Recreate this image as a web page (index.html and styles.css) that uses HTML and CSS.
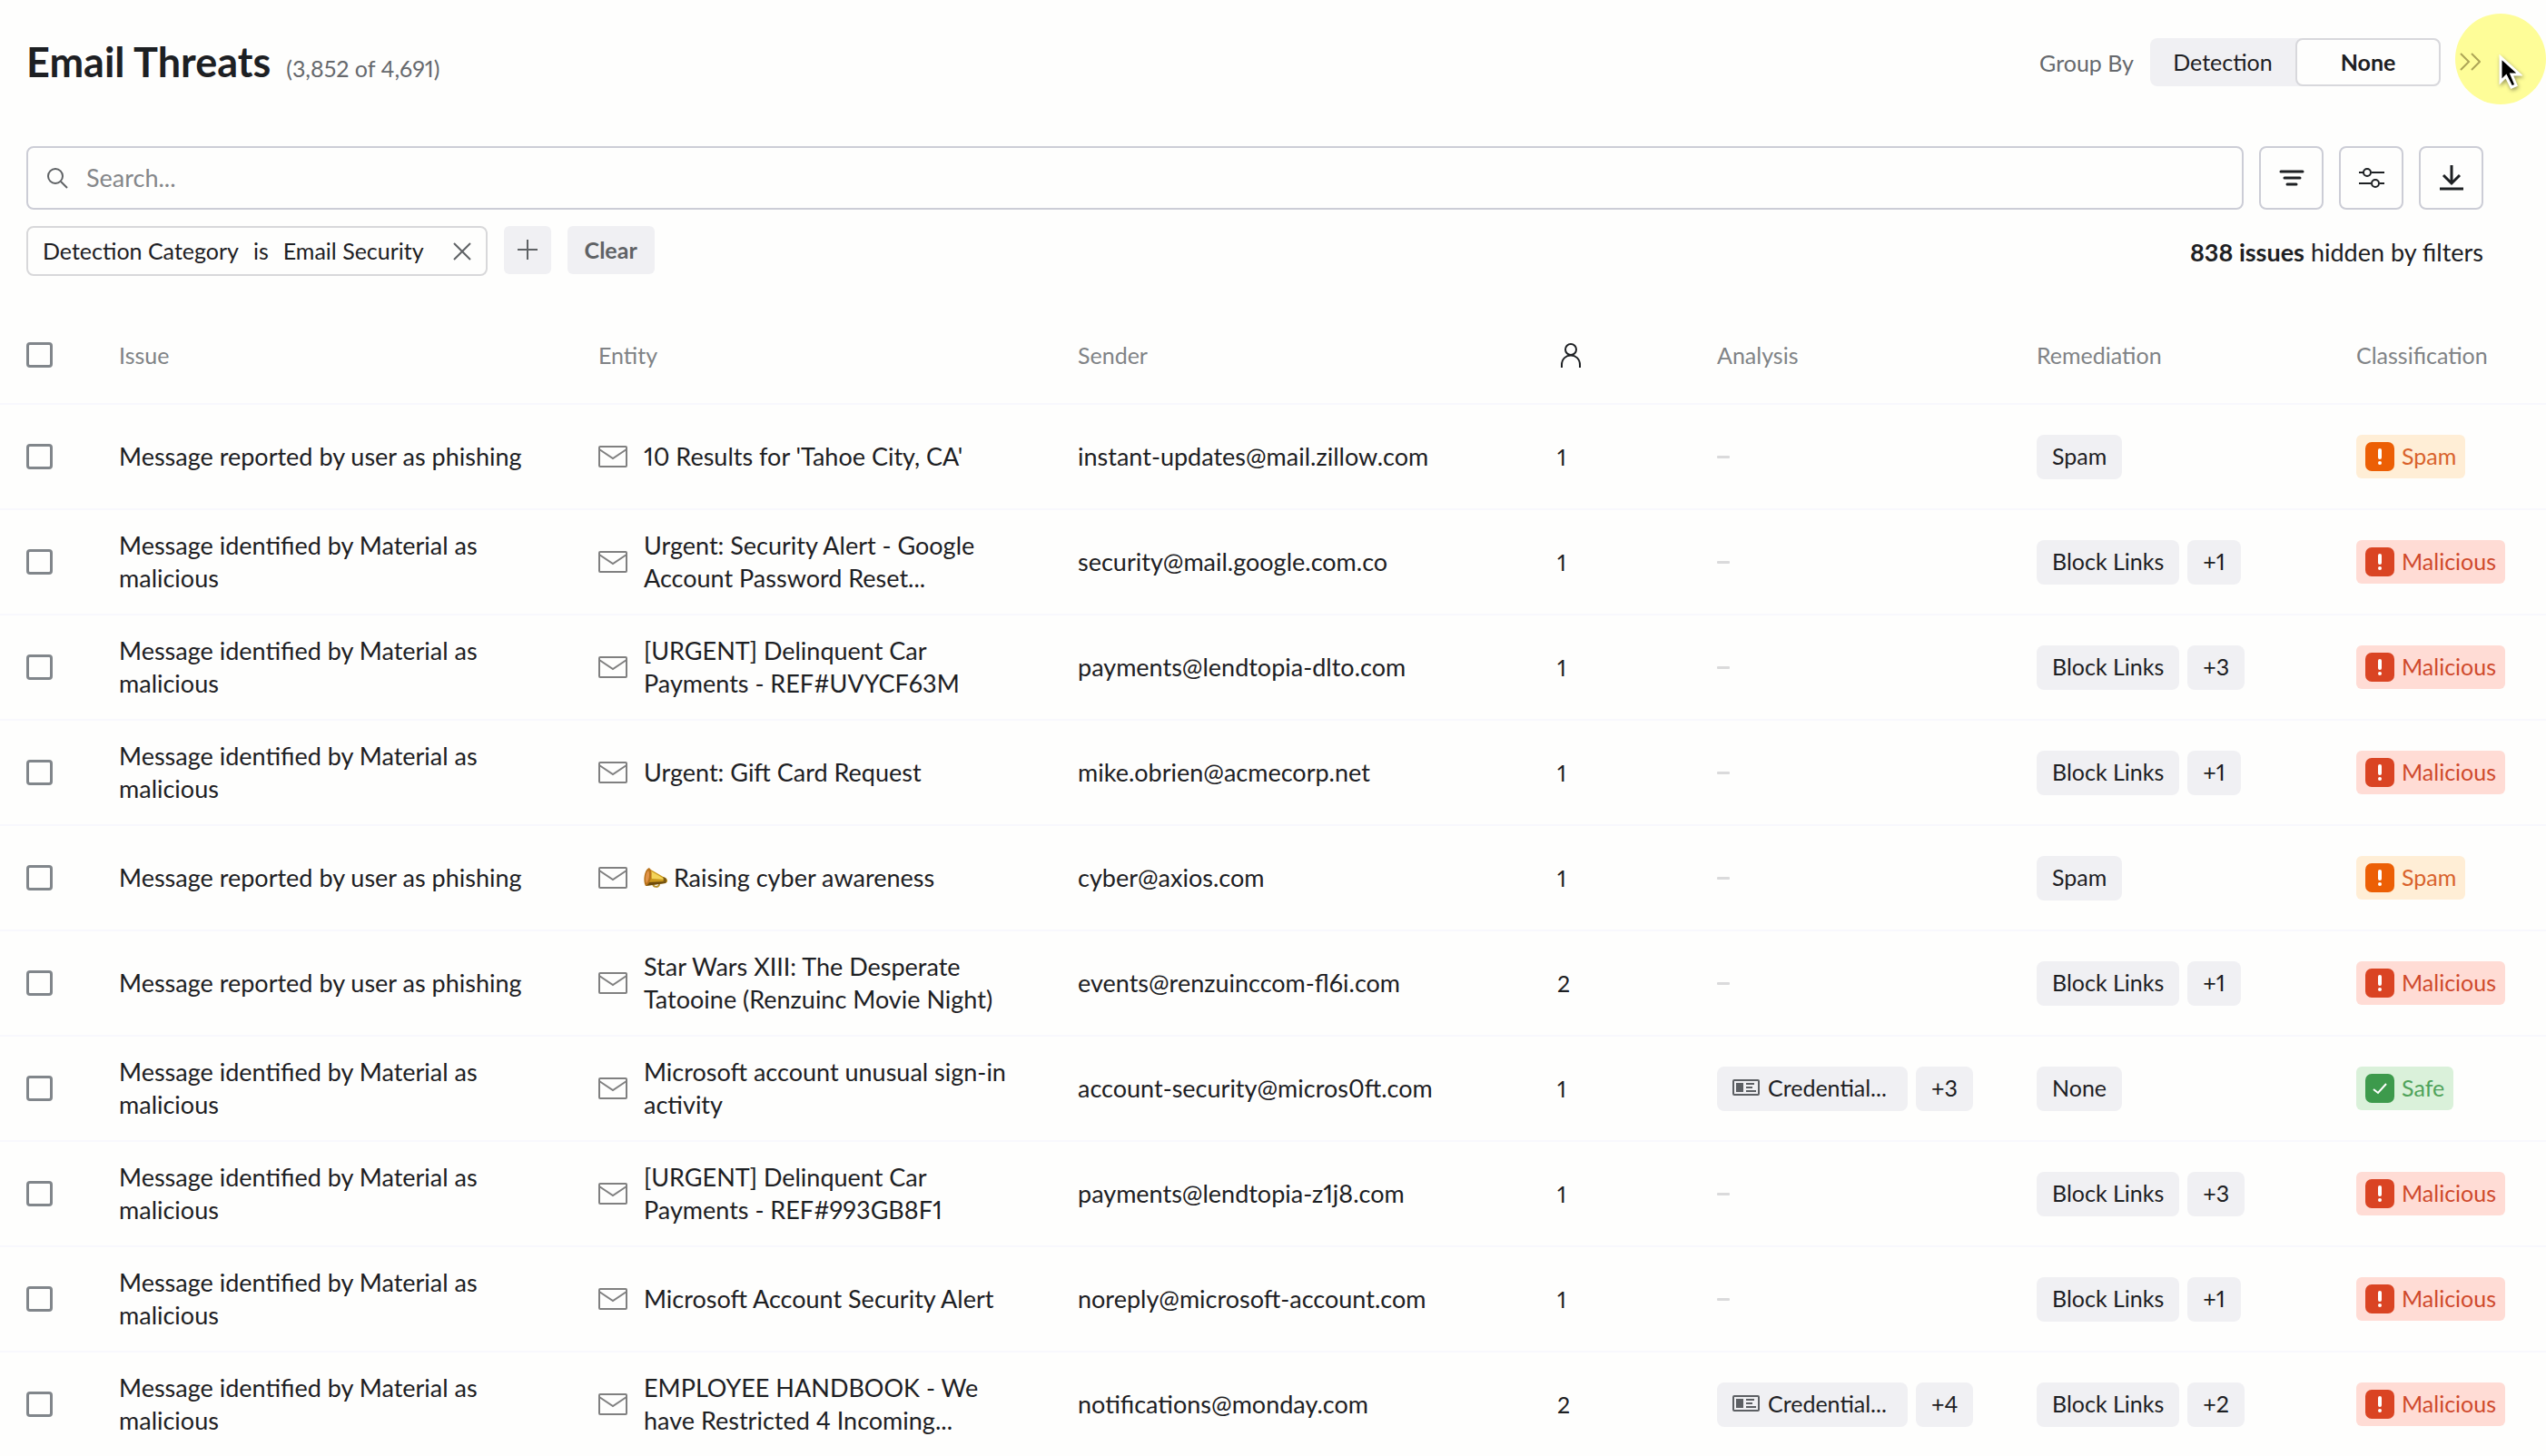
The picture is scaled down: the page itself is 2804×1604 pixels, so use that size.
FILE: index.html
```html
<!DOCTYPE html>
<html lang="en">
<head>
    <meta charset="UTF-8">
    <meta name="viewport" content="width=device-width, initial-scale=1.0">
    <title>Email Threats</title>
    <link rel="stylesheet" href="styles.css">
</head>
<body>
    <!-- Shared icons -->
    <svg class="sprite" aria-hidden="true">
        <symbol id="icon-mail" viewBox="0 0 32 24">
            <rect x="1" y="1" width="30" height="22" rx="1" fill="none" stroke="currentColor" stroke-width="2"/>
            <path d="M1 4l15 10L31 4" fill="none" stroke="currentColor" stroke-width="2"/>
        </symbol>
        <symbol id="icon-alert" viewBox="0 0 32 32">
            <rect width="32" height="32" rx="7" fill="currentColor"/>
            <path d="M16 9v8" stroke="#fff" stroke-width="4" stroke-linecap="round"/>
            <circle cx="16" cy="23" r="2" fill="#fff"/>
        </symbol>
        <symbol id="icon-check" viewBox="0 0 32 32">
            <rect width="32" height="32" rx="7" fill="currentColor"/>
            <path d="M9 17l5 4 9-10" fill="none" stroke="#fff" stroke-width="2"/>
        </symbol>
        <symbol id="icon-card" viewBox="0 0 30 18">
            <rect x="1" y="1" width="28" height="16" rx="1" fill="none" stroke="currentColor" stroke-width="2"/>
            <path d="M4 4h8v10H4z" fill="currentColor"/>
            <path d="M15 5h9M15 9h7M15 13h11" stroke="currentColor" stroke-width="2"/>
        </symbol>
        <symbol id="icon-megaphone" viewBox="0 0 26 22">
            <path d="M10 17c0 5 7 5 7 1" fill="none" stroke="#b8922c" stroke-width="2"/>
            <path d="M6 1l19 11c2 2 1 5-2 5L2 20z" fill="#c9971c"/>
            <path d="M7 3l17 10-15-1z" fill="#f3d45a"/>
            <path d="M4 16l21-1-1 2-22 3z" fill="#6d4b0d"/>
            <path d="M6 0c3 3 3 7 2 11s-3 8-6 9c-3-4-2-18 4-20z" fill="#b9731b"/>
            <path d="M5 3c2 3 1 11-2 14-2-3-1-12 2-14z" fill="#e0934a"/>
            <path d="M21 10c1 2 1 4 0 7l3-1c2-2 1-4 0-5z" fill="#7d5a12"/>
        </symbol>
    </svg>

    <header class="page-header">
        <h1>Email Threats</h1>
        <span class="count">(3,852 of 4,691)</span>
        <div class="group-by">
            <span id="group-label">Group By</span>
            <div class="segmented" role="group" aria-labelledby="group-label">
                <button type="button">Detection</button>
                <button type="button" class="active" aria-pressed="true">None</button>
            </div>
            <button type="button" class="expand" aria-label="Expand panel">
                <svg width="24" height="20" viewBox="0 0 24 20" fill="none" stroke="currentColor" stroke-width="2"><path d="M2 1l9 9-9 9M14 1l9 9-9 9"/></svg>
            </button>
        </div>
        <div class="pointer" aria-hidden="true">
            <svg width="26" height="38" viewBox="0 0 26 38"><path d="M2 3v27l6-6 6 12 5-2-5-12h9z" fill="#000" stroke="#fff" stroke-width="3"/></svg>
        </div>
    </header>

    <div class="toolbar">
        <label class="search">
            <svg width="24" height="24" viewBox="0 0 24 24" fill="none" stroke="currentColor" stroke-width="2"><circle cx="10" cy="10" r="8"/><path d="M16 16l7 7"/></svg>
            <input type="text" placeholder="Search..." aria-label="Search">
        </label>
        <button type="button" class="icon-button" aria-label="Sort">
            <svg width="28" height="28" viewBox="0 0 28 28" fill="none" stroke="currentColor" stroke-width="3" stroke-linecap="round"><path d="M2 7h24M6 14h17M9 21h10"/></svg>
        </button>
        <button type="button" class="icon-button" aria-label="Columns">
            <svg width="28" height="28" viewBox="0 0 28 28" fill="none" stroke="currentColor" stroke-width="2"><path d="M0 8h5M14 8h14M0 20h13M23 20h5"/><circle cx="9" cy="8" r="4"/><circle cx="18" cy="20" r="4"/></svg>
        </button>
        <button type="button" class="icon-button" aria-label="Download">
            <svg width="28" height="28" viewBox="0 0 28 28" fill="none" stroke="currentColor" stroke-width="3"><path d="M14 0v20M5 11l9 9 9-9M1 26h26"/></svg>
        </button>
    </div>

    <div class="filters">
        <div class="filter-chip">
            <span>Detection Category</span>
            <span>is</span>
            <span>Email Security</span>
            <button type="button" aria-label="Remove filter">
                <svg width="20" height="20" viewBox="0 0 20 20" stroke="currentColor" stroke-width="2"><path d="M1 1l18 18M19 1L1 19"/></svg>
            </button>
        </div>
        <button type="button" class="add" aria-label="Add filter">
            <svg width="22" height="22" viewBox="0 0 22 22" stroke="currentColor" stroke-width="2"><path d="M11 0v22M0 11h22"/></svg>
        </button>
        <button type="button" class="clear">Clear</button>
        <p><strong>838 issues</strong> hidden by filters</p>
    </div>

    <table class="issues">
        <thead>
            <tr>
                <th><input type="checkbox" aria-label="Select all issues"></th>
                <th>Issue</th>
                <th>Entity</th>
                <th>Sender</th>
                <th class="people" aria-label="People">
                    <svg width="24" height="28" viewBox="0 0 24 28" fill="none" stroke="currentColor" stroke-width="2"><circle cx="12" cy="8" r="6"/><path d="M2 28v-3c0-14 20-14 20 0v3"/></svg>
                </th>
                <th>Analysis</th>
                <th>Remediation</th>
                <th>Classification</th>
            </tr>
        </thead>
        <tbody id="issues">
            <!-- Rows are inserted here -->
        </tbody>
    </table>

    <script>
        const REPORTED = 'Message reported by user as phishing';
        const IDENTIFIED = 'Message identified by Material as malicious';

        const issues = [
            { issue: REPORTED, entity: "10 Results for 'Tahoe City, CA'", sender: 'instant-updates@mail.zillow.com', people: 1, analysis: [], remediation: ['Spam'], status: 'Spam' },
            { issue: IDENTIFIED, entity: 'Urgent: Security Alert - Google Account Password Reset...', sender: 'security@mail.google.com.co', people: 1, analysis: [], remediation: ['Block Links', '+1'], status: 'Malicious' },
            { issue: IDENTIFIED, entity: '[URGENT] Delinquent Car Payments - REF#UVYCF63M', sender: 'payments@lendtopia-dlto.com', people: 1, analysis: [], remediation: ['Block Links', '+3'], status: 'Malicious' },
            { issue: IDENTIFIED, entity: 'Urgent: Gift Card Request', sender: 'mike.obrien@acmecorp.net', people: 1, analysis: [], remediation: ['Block Links', '+1'], status: 'Malicious' },
            { issue: REPORTED, entity: 'Raising cyber awareness', megaphone: true, sender: 'cyber@axios.com', people: 1, analysis: [], remediation: ['Spam'], status: 'Spam' },
            { issue: REPORTED, entity: 'Star Wars XIII: The Desperate Tatooine (Renzuinc Movie Night)', sender: 'events@renzuinccom-fl6i.com', people: 2, analysis: [], remediation: ['Block Links', '+1'], status: 'Malicious' },
            { issue: IDENTIFIED, entity: 'Microsoft account unusual sign-in activity', sender: 'account-security@micros0ft.com', people: 1, analysis: ['Credential...', '+3'], remediation: ['None'], status: 'Safe' },
            { issue: IDENTIFIED, entity: '[URGENT] Delinquent Car Payments - REF#993GB8F1', sender: 'payments@lendtopia-z1j8.com', people: 1, analysis: [], remediation: ['Block Links', '+3'], status: 'Malicious' },
            { issue: IDENTIFIED, entity: 'Microsoft Account Security Alert', sender: 'noreply@microsoft-account.com', people: 1, analysis: [], remediation: ['Block Links', '+1'], status: 'Malicious' },
            { issue: IDENTIFIED, entity: 'EMPLOYEE HANDBOOK - We have Restricted 4 Incoming...', sender: 'notifications@monday.com', people: 2, analysis: ['Credential...', '+4'], remediation: ['Block Links', '+2'], status: 'Malicious' }
        ];

        function icon(name, width, height) {
            return `<svg class="${name}" width="${width}" height="${height}" aria-hidden="true"><use href="#icon-${name}"/></svg>`;
        }

        function tags(list) {
            if (!list.length) {
                return '<span class="empty"></span>';
            }
            return list.map(tag => tag.startsWith('Credential')
                ? `<span class="tag tag-wide">${icon('card', 30, 18)}${tag}</span>`
                : `<span class="tag">${tag}</span>`).join('');
        }

        document.getElementById('issues').innerHTML = issues.map(row => `
            <tr>
                <td><input type="checkbox" aria-label="Select ${row.sender}"></td>
                <td class="issue">${row.issue}</td>
                <td class="entity">${icon('mail', 32, 24)}<span>${row.megaphone ? icon('megaphone', 26, 22) + ' ' : ''}${row.entity}</span></td>
                <td>${row.sender}</td>
                <td class="people">${row.people}</td>
                <td class="tags">${tags(row.analysis)}</td>
                <td class="tags">${tags(row.remediation)}</td>
                <td><span class="status ${row.status.toLowerCase()}">${icon(row.status === 'Safe' ? 'check' : 'alert', 32, 32)}<span>${row.status}</span></span></td>
            </tr>`).join('');
    </script>
</body>
</html>
```
FILE: styles.css
```css
* {
    box-sizing: border-box;
}
body {
    margin: 0;
    background-color: #fefefd;
    color: #1d2023;
    font-family: Lato, 'Helvetica Neue', Arial, sans-serif;
    font-size: 27px;
    line-height: 36px;
    font-variant-numeric: proportional-nums;
    overflow-x: hidden;
}
button, input {
    font: inherit;
    color: inherit;
}
button {
    display: flex;
    align-items: center;
    justify-content: center;
    padding: 0 0 2px;
    border: 0;
    background: none;
    cursor: pointer;
}
svg {
    flex: none;
}
.sprite {
    position: absolute;
    width: 0;
    height: 0;
}

/* Header */
.page-header {
    position: relative;
    display: flex;
    align-items: baseline;
    padding: 42px 62px 66px 29px;
}
h1 {
    margin: 0;
    font-size: 45px;
    line-height: 53px;
    font-weight: 700;
}
.count {
    margin-left: 17px;
    font-size: 25px;
    color: #66696d;
}
.group-by {
    display: flex;
    align-items: center;
    align-self: center;
    margin-left: auto;
    font-size: 25px;
    color: #66696d;
}
.segmented {
    display: flex;
    margin-left: 18px;
    border-radius: 8px;
    background-color: #f0f0f3;
    color: #1d2023;
}
.segmented button {
    width: 160px;
    height: 53px;
    border-radius: 8px;
}
.segmented .active {
    border: 2px solid #d8d8dc;
    background-color: #fefefd;
    font-weight: 700;
}
.expand {
    position: relative;
    z-index: 1;
    margin-left: 20px;
    width: 34px;
    height: 53px;
    justify-content: start;
    color: #ada557;
}
.pointer {
    position: absolute;
    top: 15px;
    right: 0;
    width: 100px;
    height: 100px;
    padding: 45px 0 0 48px;
    border-radius: 50%;
    background-color: #fefd98;
    pointer-events: none;
}
.pointer svg {
    display: block;
    filter: drop-shadow(1px 2px 2px rgba(0, 0, 0, 0.4));
}

/* Search and filters */
.toolbar {
    display: flex;
    gap: 17px;
    padding: 0 69px 0 29px;
}
.search {
    flex: 1;
    display: flex;
    align-items: center;
    gap: 20px;
    height: 70px;
    padding: 0 20px;
    border: 2px solid #cccdd6;
    border-radius: 8px;
    color: #5f6265;
}
.search input {
    flex: 1;
    padding: 0;
    border: 0;
    outline: 0;
    background: none;
}
.search input::placeholder {
    color: #85878a;
    opacity: 1;
}
.icon-button {
    width: 71px;
    height: 70px;
    padding: 0;
    border: 2px solid #cccdd6;
    border-radius: 8px;
}
.filters {
    display: flex;
    gap: 18px;
    padding: 18px 69px 34px 29px;
    font-size: 25px;
}
.filter-chip {
    display: flex;
    align-items: center;
    gap: 16px;
    height: 55px;
    padding: 0 16px 2px;
    border: 2px solid #d8d8da;
    border-radius: 8px;
}
.filter-chip button {
    margin-left: 16px;
    padding: 2px 0 0;
    color: #5f6265;
}
.add, .clear {
    height: 53px;
    border-radius: 6px;
    background-color: #f0f0f3;
    color: #5f6265;
}
.add {
    width: 52px;
}
.clear {
    width: 96px;
    font-weight: 700;
}
.filters p {
    margin: 11px 0 0 auto;
    font-size: 27px;
}

/* Issues table */
.issues, .issues thead, .issues tbody {
    display: block;
}
.issues tr {
    display: grid;
    grid-template-columns: 102px 3fr 3fr 3fr 1fr 2fr 2fr 209px;
    align-items: center;
    height: 116px;
    padding-left: 29px;
    border-bottom: 2px solid #f8f8fd;
}
.issues thead tr {
    height: 108px;
}
.issues th, .issues td {
    padding: 0;
    text-align: left;
}
.issues th {
    font-size: 25px;
    font-weight: 400;
    color: #808386;
}
.issues input {
    display: block;
    appearance: none;
    width: 29px;
    height: 28px;
    margin: 0;
    border: 3px solid #81868b;
    border-radius: 4px;
}
.issues svg {
    display: block;
}
.issues .people {
    font-size: 25px;
    color: #1d2023;
}
th.people svg {
    margin-left: 3px;
}
.issues .issue, .issues .entity {
    padding-right: 64px;
}
.entity {
    display: flex;
    align-items: center;
    gap: 18px;
}
.mail {
    color: #808080;
}
.issues .megaphone {
    display: inline-block;
    vertical-align: -1px;
}
.tags {
    display: flex;
    gap: 9px;
}
.tag {
    display: flex;
    align-items: center;
    gap: 9px;
    height: 49px;
    padding: 0 17px 2px;
    border-radius: 8px;
    background-color: #f0f0f3;
    font-size: 25px;
}
.tag-wide {
    width: 210px;
}
.card {
    color: #5c5f63;
}
.empty {
    width: 14px;
    height: 3px;
    border-radius: 1px;
    background-color: #dadadb;
}
.status {
    display: inline-flex;
    align-items: center;
    gap: 8px;
    height: 48px;
    padding: 0 10px;
    border-radius: 6px;
    font-size: 25px;
    vertical-align: top;
}
.status span {
    padding-bottom: 2px;
}
.malicious {
    background-color: #ffdcd5;
    color: #da4423;
}
.spam {
    background-color: #ffeed6;
    color: #ec5f05;
}
.safe {
    background-color: #daf1da;
    color: #3d9a4c;
}
.malicious span {
    color: #cf4a2c;
}
.spam span {
    color: #d9622b;
}
.safe span {
    color: #4fa35a;
}
```
